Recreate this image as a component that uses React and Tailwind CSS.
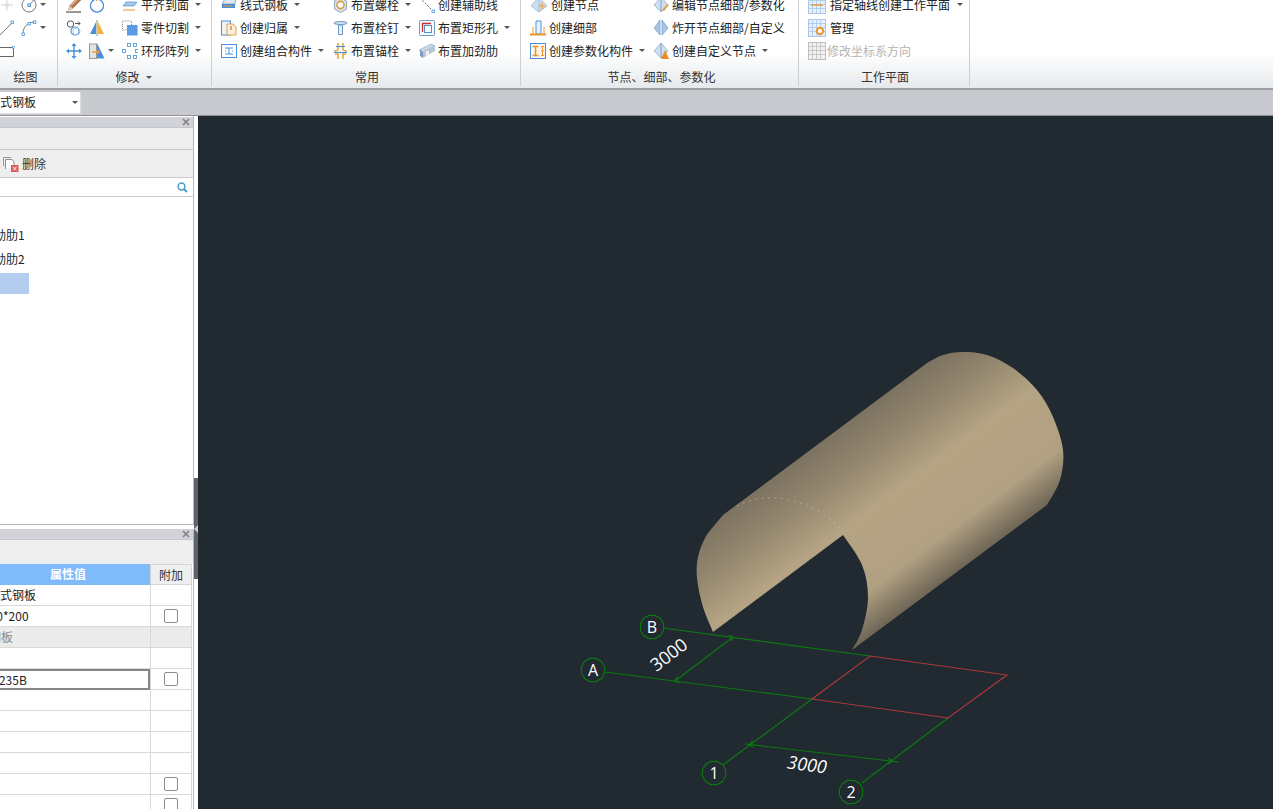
import React from "react";

const B = "#4a90d9";
const LB = "#a9c6e8";
const O = "#f0942e";

const Svg = ({ w = 16, children }) => (
  <svg width={w} height="16" viewBox={`0 0 ${w} 16`} className="shrink-0 block" fill="none">
    {children}
  </svg>
);

const I = {
  cross: <Svg><path d="M8 2v12M2 8h12" stroke="#d5d5d5" /><circle cx="8" cy="8" r="2.2" fill="#e0e0e0" /></Svg>,
  circ: <Svg><circle cx="8" cy="8" r="7" stroke="#777" strokeWidth="1" /><rect x="7" y="7" width="2.4" height="2.4" stroke={B} /><path d="M9 7l4-4" stroke="#888" /><rect x="12" y="1.5" width="2" height="2" fill="#fff" stroke={B} strokeWidth=".7" /></Svg>,
  line: <Svg><path d="M1 15L13 3" stroke="#777" /><rect x="12" y="1" width="2.4" height="2.4" fill="#fff" stroke={B} strokeWidth=".8" /></Svg>,
  arc: <Svg><path d="M2 14C2 7 6 3 13 2" stroke="#777" /><rect x="1" y="13" width="2.4" height="2.4" fill="#fff" stroke={B} strokeWidth=".8" /><rect x="7" y="2.5" width="2.4" height="2.4" fill="#fff" stroke={B} strokeWidth=".8" /><rect x="12.5" y="1" width="2.4" height="2.4" fill="#fff" stroke={B} strokeWidth=".8" /></Svg>,
  rect: <Svg><path d="M1 4.5h13.5v9H1" stroke="#666" /><rect x="13.5" y="3.5" width="2" height="2" fill="#fff" stroke={B} strokeWidth=".6" /></Svg>,
  pencil: <Svg><path d="M13 -1l3 3L6.5 11.5 2.5 13l1.2-4.2z" fill="#b9774a" stroke="#8a5a36" strokeWidth=".5" /><path d="M5 8.5L12.5 1" stroke="#e3b48c" strokeWidth="1.2" /><path d="M2.5 13l1.2-4.2 2.8 2.7z" fill="#e9d3ba" /><path d="M0 15h15" stroke="#333" /></Svg>,
  rotate: <Svg><path d="M6 2.5A6.5 6.5 0 1 0 10 2.5" stroke={B} strokeWidth="1.3" /><path d="M7 0.5l2.5 2L7 4.5z" fill={O} /></Svg>,
  offset: <Svg><circle cx="4.5" cy="4" r="3.2" stroke="#555" /><circle cx="9" cy="11" r="4" stroke={B} strokeWidth="1.2" /><circle cx="10.5" cy="11.5" r="3.5" stroke={LB} /><path d="M9 3.5h5M12 1.5l2 2-2 2" stroke="#555" /></Svg>,
  mirror: <Svg><path d="M7 2L1 14h6z" fill={B} /><path d="M9 2l6 12H9z" fill="#f3b23e" /><path d="M8 0v16" stroke="#888" /></Svg>,
  move: <Svg><path d="M8 1v14M1 8h14" stroke={B} strokeWidth="1.4" /><path d="M8 0l2.6 3H5.4zM8 16l2.6-3H5.4zM0 8l3-2.6v5.2zM16 8l-3-2.6v5.2z" fill={B} /></Svg>,
  stretch: <Svg><rect x="0.5" y="1" width="7" height="14.5" fill="#e4e4e4" stroke="#999" /><path d="M8 15.5V0l7.5 15.5z" fill={B} /><path d="M3 9h6" stroke={O} strokeWidth="1.4" /><path d="M8 6.5L11 9l-3 2.5z" fill={O} /></Svg>,
  align: <Svg><path d="M3 1h12M1 13h12" stroke={O} strokeWidth="1.2" /><path d="M4 5h11L12 9H1z" fill={LB} stroke={B} strokeWidth=".7" /></Svg>,
  cut: <Svg><rect x="0.5" y="1" width="9" height="9" stroke="#888" strokeDasharray="1 1" /><rect x="5" y="5" width="10.5" height="10.5" fill="#5a9be6" /></Svg>,
  ring: <Svg>{[[5, 0], [11, 0], [0, 6], [13, 6], [5, 12], [11, 12]].map(([x, y], i) => <rect key={i} x={x + 0.5} y={y + 0.5} width="3" height="3" stroke={B} strokeWidth=".8" />)}</Svg>,
  plate: <Svg><path d="M1 7l3-5h11l-1 5z" fill="#dfe8f2" stroke="#7f9cbc" strokeWidth=".8" /><path d="M1 7h13v4H1z" fill={B} /><path d="M3 9h8" stroke={O} /></Svg>,
  own: <Svg><rect x="0.5" y="1" width="9" height="14" stroke={B} fill="#eaf2fb" /><path d="M6 4h6l3 3v8H6z" fill="#fbeedb" stroke={O} strokeWidth=".9" /><path d="M10 6v4" stroke="#b5651d" /></Svg>,
  group: <Svg><rect x="0.5" y="1.5" width="15" height="13" stroke={B} /><path d="M4 5h8M4 11h8M8 5v6M4 8h1M11 8h1" stroke={B} /></Svg>,
  bolt: <Svg w={15}><path d="M7.5 0.5l6 3.5v8l-6 3.5-6-3.5V4z" fill="#dbe4ee" stroke="#8ea4bd" /><circle cx="7.5" cy="8" r="3.6" fill="#fff" stroke="#e09a3c" strokeWidth="1.6" /></Svg>,
  stud: <Svg w={15}><path d="M1 3c0-2 13-2 13 0 0 2-13 2-13 0z" fill="#cfe0f2" stroke="#6f98c4" /><path d="M5.5 5h4v9.5h-4z" fill="#e6f0fa" stroke="#6f98c4" /></Svg>,
  anchor: <Svg w={15}><path d="M5 0v6c0 1.5-2 2-4 2M10 0v6c0 1.5 2 2 4 2" stroke="#eda63a" strokeWidth="1.6" /><path d="M5 16v-5H2M10 16v-5h3" stroke="#eda63a" strokeWidth="1.6" /><path d="M3 3.5h9" stroke={B} strokeWidth="1.2" /><path d="M1 9.5h13" stroke={B} strokeWidth="1.2" /></Svg>,
  guide: <Svg><path d="M1 1l13 13" stroke="#666" strokeDasharray="2 1.4" /><rect x="13" y="13" width="2.5" height="2.5" fill="#fff" stroke={B} strokeWidth=".8" /></Svg>,
  hole: <Svg><rect x="0.5" y="0.5" width="15" height="15" rx="1" stroke="#6f98c4" fill="#f6f9fd" /><path d="M3.5 12V3.5H12" stroke="#c9302c" strokeWidth="1.3" /><rect x="5.5" y="5.5" width="7" height="7" stroke={B} /></Svg>,
  rib: <Svg><path d="M0 7l12-6 4 2-12 6z" fill="#c9d7e6" stroke="#8aa0b8" strokeWidth=".6" /><path d="M4 9v6l-3-2V7z" fill="#7f9cbc" /><path d="M4 9l12-6v5L4 15z" fill="#b7c7d8" /><path d="M7 8h3v5H7z" fill="#eef3f8" /></Svg>,
  node: <Svg w={18}><path d="M9 0l8 9-8 6-8-6z" fill="#cfdff0" stroke="#8fb0d3" strokeWidth=".7" /><path d="M9 0v15" stroke="#9dbbd9" /><path d="M9 9h6M12 6v6" stroke="#f0b36a" strokeWidth="2" /></Svg>,
  nodeEdit: <Svg><path d="M8 0l7 8-7 7-7-7z" fill="#cfdff0" stroke="#7fa3c9" strokeWidth=".7" /><path d="M8 0v15" stroke="#7fa3c9" /><path d="M9 13l5-6 2 1-5 6z" fill="#e0a24e" /></Svg>,
  nodeSplit: <Svg><path d="M7 0v15L1 8z" fill="#a9c6e8" stroke="#6f98c4" strokeWidth=".7" /><path d="M9 0v15l6-7z" fill="#a9c6e8" stroke="#6f98c4" strokeWidth=".7" /></Svg>,
  nodeCustom: <Svg><path d="M8 0l7 8-7 7-7-7z" fill="#cfdff0" stroke="#7fa3c9" strokeWidth=".7" /><path d="M8 0v15" stroke="#7fa3c9" /><path d="M12 7l4 9H8z" fill="#ee8a2a" /></Svg>,
  detail: <Svg><path d="M6 1h5v13H6z" stroke={B} fill="#eaf2fb" /><path d="M3 7v7M14 7v7" stroke={O} /><path d="M0 14.5h16" stroke={O} strokeWidth="2" /></Svg>,
  param: <Svg><rect x="0.5" y="0.5" width="15" height="15" stroke={B} fill="#fdf6ea" /><path d="M2.5 3.5h6M2.5 12.5h6M5.5 3.5v9" stroke={O} strokeWidth="1.6" /><path d="M11 3.5h3M11 8h3M11 12.5h3M12.5 3.5v9" stroke={O} /></Svg>,
};

const Grid = ({ stroke, fill, children }) => (
  <svg width="18" height="18" viewBox="0 0 18 18" className="shrink-0 block" fill="none">
    <rect x="0.5" y="0.5" width="17" height="17" fill={fill} stroke={stroke} />
    <path d="M4.5 1v16M8.5 1v16M12.5 1v16M1 4.5h16M1 8.5h16M1 12.5h16" stroke={stroke} strokeWidth=".8" />
    {children}
  </svg>
);

const Arrow = ({ cls = "ml-[3px]" }) => (
  <span className={`${cls} w-0 h-0 shrink-0 border-x-[3px] border-t-[3px] border-x-transparent border-t-[#555]`} />
);

const Item = ({ icon, label, arrow, gap = "gap-[3px]", muted }) => (
  <div className={`h-[23px] flex items-center ${gap} whitespace-nowrap ${muted ? "text-[#b4b4b4]" : ""}`}>
    {icon}
    {label && <span>{label}</span>}
    {arrow && <Arrow />}
  </div>
);

const Group = ({ w, label, labelExtra, labelCls = "", children, pl = "pl-[9px]" }) => (
  <div className={`${w} shrink-0 h-[86px] flex flex-col border-r border-[#ccd0d4]`}>
    <div className={`-mt-[7px] h-[69px] flex ${pl}`}>{children}</div>
    <div className={`mt-[8px] h-[14px] leading-[14px] flex items-center justify-center gap-[6px] text-[#333] ${labelCls}`}>
      {label}
      {labelExtra}
    </div>
  </div>
);

const Check = () => <span className="block w-[14px] h-[14px] rounded-[2px] border border-[#8c8c8c] bg-white" />;

const Close = () => (
  <svg width="8" height="8" viewBox="0 0 8 8" className="block">
    <path d="M1 1l6 6M7 1L1 7" stroke="#808080" strokeWidth="1.6" />
  </svg>
);

const TitleBar = () => (
  <div className="h-[11px] bg-[#d1d3d8] border-b border-[#c4c6cb] flex items-center justify-end pr-[3px]">
    <Close />
  </div>
);

const rows = [
  { text: "线式钢板", ml: "-ml-[12px]" },
  { text: "800*200", ml: "-ml-[17px]", check: true },
  { text: "钢板", ml: "-ml-[11px]", gray: true },
  {},
  { text: "Q235B", ml: "-ml-[10px]", check: true, sel: true },
  {},
  {},
  {},
  {},
  { check: true },
  { check: true },
];

const poly = (cx, cy, r, n = 12) =>
  Array.from({ length: n }, (_, i) => {
    const a = (i * 2 * Math.PI) / n + Math.PI / n;
    return `${(cx + r * Math.cos(a)).toFixed(1)},${(cy + r * Math.sin(a)).toFixed(1)}`;
  }).join(" ");

const smooth = (p) => {
  let d = "";
  for (let i = 0; i < p.length - 1; i++) {
    const p0 = p[Math.max(i - 1, 0)];
    const p1 = p[i];
    const p2 = p[i + 1];
    const p3 = p[Math.min(i + 2, p.length - 1)];
    const c1 = [p1[0] + (p2[0] - p0[0]) / 6, p1[1] + (p2[1] - p0[1]) / 6];
    const c2 = [p2[0] - (p3[0] - p1[0]) / 6, p2[1] - (p3[1] - p1[1]) / 6];
    d += `C${c1[0].toFixed(1)} ${c1[1].toFixed(1)} ${c2[0].toFixed(1)} ${c2[1].toFixed(1)} ${p2[0]} ${p2[1]}`;
  }
  return d;
};

const leftArc = [[713, 632], [703, 607], [697, 578], [698, 557], [705, 538], [713, 527], [723, 515]];
const rightArc = [[927, 363], [943, 355], [963, 352], [987, 355], [1013, 368], [1037, 390], [1053, 417], [1063, 450], [1060, 480], [1047, 505]];
const innerArc = [[852, 650], [862, 630], [868, 597], [862, 565], [843, 535]];
const cylinderPath = `M713 632${smooth(leftArc)}L927 363${smooth(rightArc)}L852 650${smooth(innerArc)}Z`;

const GREEN = "#0b7a0f";
const RED = "#b0383c";

const Bubble = ({ x, y, t }) => (
  <g>
    <polygon points={poly(x, y, 12)} stroke={GREEN} strokeWidth="1.1" fill="none" />
    <text x={x} y={y + 6} textAnchor="middle" fontSize="16" fill="#fff" fontFamily="'Open Sans',sans-serif">{t}</text>
  </g>
);

const Canvas = () => (
  <svg viewBox="198 116 1075 693" width="1075" height="693" className="block">
    <defs>
      <linearGradient id="cyl" gradientUnits="userSpaceOnUse" x1="825" y1="440" x2="935" y2="588">
        <stop offset="0" stopColor="#7d7361" />
        <stop offset="0.2" stopColor="#93866e" />
        <stop offset="0.45" stopColor="#b5a483" />
        <stop offset="0.8" stopColor="#b1a082" />
        <stop offset="1" stopColor="#6f6656" />
      </linearGradient>
    </defs>
    <path d={cylinderPath} fill="url(#cyl)" />
    <path d="M737 506C752 499 765 497 778 498C800 500 825 512 840 528" stroke="#d8cdb6" strokeWidth="1" strokeDasharray="1.5 5" fill="none" opacity="0.6" />
    <g stroke={GREEN} strokeWidth="1.2" fill="none">
      <path d="M663 628L870 656M605 672L812 699M812 699L723 765M948 718L862 783" />
      <path d="M733 637L675 681M745 744L899 762" />
      <path d="M729 635L733 637L731 641M679 683L675 681L677 677M753 741L749 744.5L753 747M888 764L892 761L888 758" />
    </g>
    <path d="M870 656L1007 675L948 718L812 699Z" stroke={RED} strokeWidth="1.1" fill="none" />
    <Bubble x={652} y={627} t="B" />
    <Bubble x={593} y={670} t="A" />
    <Bubble x={714} y={773} t="1" />
    <Bubble x={851} y={792} t="2" />
    <text x="669" y="661" textAnchor="middle" fontSize="18" fill="#fff" fontFamily="'Open Sans',sans-serif" transform="rotate(-37 669 655)">3000</text>
    <text x="807" y="771" textAnchor="middle" fontSize="18" fill="#fff" fontStyle="italic" fontFamily="'Open Sans',sans-serif" transform="rotate(7.5 807 765)">3000</text>
  </svg>
);

export default function App() {
  return (
    <div
      className="w-[1273px] h-[809px] overflow-hidden flex flex-col bg-white text-[12px] text-[#222] relative"
      style={{ fontFamily: "'Noto Sans CJK SC','Open Sans',sans-serif" }}
    >
      <div className="h-[88px] shrink-0 flex bg-gradient-to-b from-white from-60% to-[#e6e9ec] overflow-hidden">
        <Group w="w-[58px]" label="绘图" labelCls="pr-[6px]" pl="pl-0">
          <div className="w-[22px] -ml-px">
            <Item icon={I.cross} />
            <Item icon={I.line} />
            <Item icon={I.rect} />
          </div>
          <div>
            <Item icon={I.circ} arrow gap="gap-0" />
            <Item icon={I.arc} arrow gap="gap-0" />
          </div>
        </Group>
        <Group w="w-[154px]" label="修改" labelCls="pr-[2px]" labelExtra={<Arrow cls="" />} pl="pl-[8px]">
          <div className="w-[23px]">
            <Item icon={I.pencil} />
            <Item icon={I.offset} />
            <Item icon={I.move} />
          </div>
          <div className="w-[33px]">
            <Item icon={I.rotate} />
            <Item icon={I.mirror} />
            <div className="h-[23px] flex items-center gap-[3px]">{I.stretch}<Arrow cls="" /></div>
          </div>
          <div>
            <Item icon={I.align} label="平齐到面" arrow />
            <Item icon={I.cut} label="零件切割" arrow />
            <Item icon={I.ring} label="环形阵列" arrow />
          </div>
        </Group>
        <Group w="w-[309px]" label="常用" labelCls="pl-[2px]">
          <div className="w-[112px]">
            <Item icon={I.plate} label="线式钢板" arrow />
            <Item icon={I.own} label="创建归属" arrow />
            <Item icon={I.group} label="创建组合构件" arrow />
          </div>
          <div className="w-[86px]">
            <Item icon={I.bolt} label="布置螺栓" arrow />
            <Item icon={I.stud} label="布置栓钉" arrow />
            <Item icon={I.anchor} label="布置锚栓" arrow />
          </div>
          <div>
            <Item icon={I.guide} label="创建辅助线" />
            <Item icon={I.hole} label="布置矩形孔" arrow />
            <Item icon={I.rib} label="布置加劲肋" />
          </div>
        </Group>
        <Group w="w-[278px]" label="节点、细部、参数化" labelCls="pl-[4px]">
          <div className="w-[123px]">
            <Item icon={I.node} label="创建节点" />
            <Item icon={I.detail} label="创建细部" />
            <Item icon={I.param} label="创建参数化构件" arrow />
          </div>
          <div>
            <Item icon={I.nodeEdit} label="编辑节点细部/参数化" />
            <Item icon={I.nodeSplit} label="炸开节点细部/自定义" />
            <Item icon={I.nodeCustom} label="创建自定义节点" arrow />
          </div>
        </Group>
        <Group w="w-[171px]" label="工作平面" labelCls="pl-[2px]">
          <div>
            <Item
              icon={<Grid stroke="#a9c6e8" fill="#e6f0fb"><path d="M3 9h12" stroke={O} strokeWidth="1.4" /></Grid>}
              label="指定轴线创建工作平面"
              arrow
              gap="gap-[4px]"
            />
            <Item
              icon={<Grid stroke="#a9c6e8" fill="#e6f0fb"><circle cx="12" cy="12" r="3.2" stroke={O} strokeWidth="2" fill="#fff" /></Grid>}
              label="管理"
              gap="gap-[4px]"
            />
            <Item icon={<Grid stroke="#bdbdbd" fill="#f2f2f2" />} label="修改坐标系方向" muted gap="gap-[1px]" />
          </div>
        </Group>
      </div>

      <div className="h-[28px] shrink-0 bg-[#c8cacf] border-t-2 border-[#9b9da1] border-b border-b-[#8f9195] flex items-center">
        <div className="w-[81px] h-[22px] bg-white rounded-r-[2px] border-r border-b border-[#dcdde0] flex items-center overflow-hidden">
          <span className="-ml-[12px] w-[84px] shrink-0 whitespace-nowrap">线式钢板</span>
          <Arrow cls="" />
        </div>
      </div>

      <div className="flex-1 min-h-0 flex">
        <div className="w-[198px] shrink-0 flex flex-col overflow-hidden">
          <div className="w-[194px] h-[409px] shrink-0 flex flex-col border-r border-b border-[#b5b7ba] pt-px">
            <TitleBar />
            <div className="h-[22px] bg-[#eeeeee] border-b border-[#c8cacf]" />
            <div className="h-[28px] bg-[#eeeeee] border-b border-[#c8cacf] flex items-center pl-[3px] gap-[3px]">
              <svg width="16" height="16" viewBox="0 0 16 16" className="block shrink-0" fill="none">
                <path d="M0.5 10V1.5H8" stroke="#9a9a9a" />
                <path d="M2.5 13V3.5H9L11 6V10" stroke="#8f8f8f" fill="#fff" />
                <rect x="8" y="9" width="7.5" height="7" fill="#dc5a5a" />
                <path d="M10 10.8l3.5 3.5M13.5 10.8L10 14.3" stroke="#fff" />
              </svg>
              <span className="text-[#333]">删除</span>
            </div>
            <div className="h-[19px] bg-white border-b border-[#c8cacf] flex items-center justify-end pr-[5px]">
              <svg width="11" height="11" viewBox="0 0 11 11" className="block" fill="none">
                <circle cx="4.5" cy="4.5" r="3.4" stroke="#4b9bd2" strokeWidth="1.5" />
                <path d="M7 7l3 3" stroke="#4b9bd2" strokeWidth="2" />
              </svg>
            </div>
            <div className="pt-[26px]">
              <div className="h-[24px] flex items-center -ml-[18px] whitespace-nowrap">加劲肋1</div>
              <div className="h-[24px] flex items-center -ml-[18px] whitespace-nowrap">加劲肋2</div>
              <div className="h-[21px] mt-[2px] w-[29px] bg-[#b2cdee]" />
            </div>
          </div>
          <div className="h-[4px] shrink-0" />
          <div className="w-[194px] flex flex-col border-r border-[#b5b7ba]">
            <TitleBar />
            <div className="h-[24px] bg-[#eeeeee]" />
            <div className="flex h-[21px]">
              <div className="w-[150px] bg-[#7fbafb] text-white font-bold text-center leading-[20px]">
                <span className="block -ml-[14px]">属性值</span>
              </div>
              <div className="w-[42px] bg-[#efefef] border border-[#d5d5d5] text-center leading-[20px] text-[#333]">附加</div>
            </div>
            {rows.map((r, i) => (
              <div key={i} className="flex h-[21px] shrink-0">
                <div
                  className={`w-[150px] overflow-hidden whitespace-nowrap flex items-center ${
                    r.sel ? "border-2 border-l-0 border-[#858585]" : "border-b border-[#d8d8d8]"
                  } ${r.gray ? "bg-[#ebebeb] text-[#8a8a8a]" : ""}`}
                >
                  {r.text && <span className={r.ml}>{r.text}</span>}
                </div>
                <div className={`w-[42px] border-x border-b border-[#d8d8d8] flex items-center justify-center ${r.gray ? "bg-[#ebebeb]" : ""}`}>
                  {r.check && <Check />}
                </div>
              </div>
            ))}
          </div>
        </div>
        <div className="flex-1 min-w-0 bg-[#212931] overflow-hidden">
          <Canvas />
        </div>
      </div>

      <div className="absolute left-[194px] top-[478px] w-[4px] h-[101px] bg-[#5c636d] flex items-center">
        <span className="w-0 h-0 border-y-[4px] border-r-[4px] border-y-transparent border-r-[#c9cdd2]" />
      </div>
    </div>
  );
}
